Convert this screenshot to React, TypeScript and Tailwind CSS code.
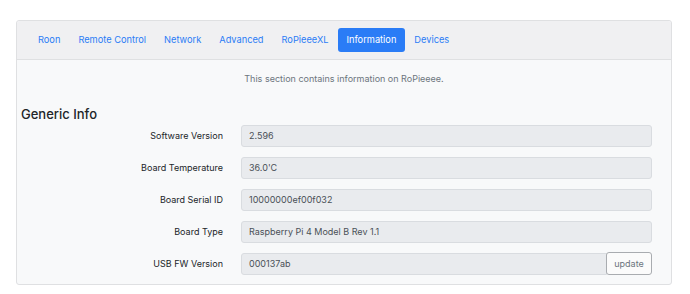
const tabs = ["Roon", "Remote Control", "Network", "Advanced", "RoPieeeXL", "Information", "Devices"];

const rows = [
  { label: "Software Version", value: "2.596" },
  { label: "Board Temperature", value: "36.0'C" },
  { label: "Board Serial ID", value: "10000000ef00f032" },
  { label: "Board Type", value: "Raspberry Pi 4 Model B Rev 1.1" },
  { label: "USB FW Version", value: "000137ab", button: "update" },
];

export default function App() {
  return (
    <div
      className="w-[690px] h-[294px] bg-white pt-[20px] pl-[16px] overflow-hidden"
      style={{ fontFamily: "Inter, 'Liberation Sans', sans-serif" }}
    >
      <div className="w-[656px] border border-[#dfe0e2] rounded-[3px] bg-[#f8f9fa]">
        <div className="h-[39px] bg-[#f0f0f2] border-b border-[#dfe0e2] flex items-center pl-[12px] rounded-t-[3px]">
          <ul className="flex">
            {tabs.map((t) => (
              <li
                key={t}
                className={
                  t === "Information"
                    ? "h-[24px] px-[9px] flex items-center rounded-[3px] bg-[#2a7cf6] text-white text-[9.25px]"
                    : "h-[24px] px-[9px] flex items-center text-[#2a7cf6] text-[9.25px]"
                }
              >
                {t}
              </li>
            ))}
          </ul>
        </div>

        <div className="pb-[9px]">
          <p className="pt-[12px] text-center text-[9px] leading-[14px] text-[#6c757d]">
            This section contains information on RoPieeee.
          </p>
          <h4 className="mt-[20px] pl-[4px] text-[13px] leading-[16px] font-medium text-[#212529]">
            Generic Info
          </h4>

          <div className="mt-[3px] pr-[19px] flex flex-col gap-[10px]">
            {rows.map((r) => (
              <div key={r.label} className="flex items-center h-[22px]">
                <div className="w-[206px] text-right text-[9px] text-[#212529]">{r.label}</div>
                <div className="ml-[18px] flex-1 flex h-[22px]">
                  <div
                    className={
                      r.button
                        ? "flex-1 flex items-center pl-[7px] bg-[#e9ebee] border border-[#d9dce0] rounded-l-[3px] text-[9px] text-[#495057]"
                        : "flex-1 flex items-center pl-[7px] bg-[#e9ebee] border border-[#d9dce0] rounded-[3px] text-[9px] text-[#495057]"
                    }
                  >
                    {r.value}
                  </div>
                  {r.button && (
                    <button className="w-[46px] -ml-px h-[23px] -mt-px bg-[#fbfbfb] border border-[#a9acb0] rounded-[3px] text-[9px] text-[#6c757d]">
                      {r.button}
                    </button>
                  )}
                </div>
              </div>
            ))}
          </div>
        </div>
      </div>
    </div>
  );
}
